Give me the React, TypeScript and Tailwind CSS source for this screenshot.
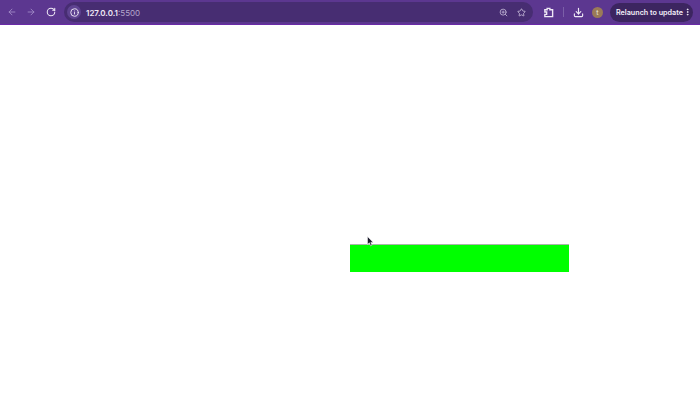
import React from 'react';
import { ArrowLeft, ArrowRight, RotateCw, Info, ZoomIn, Star, Download, EllipsisVertical } from 'lucide-react';

const App = () => {
  return (
    <div className="w-[700px] h-[415px] overflow-hidden bg-white font-['Inter','Liberation_Sans',sans-serif]">
      {/* browser toolbar */}
      <div className="h-[25px] bg-[#5c3790] border-b border-[#6a2aa8] flex items-center pl-[7px] pr-[4px]">
        <div className="flex items-center gap-[9px] text-[#a58fc9]">
          <ArrowLeft className="w-[10px] h-[10px]" strokeWidth={2} />
          <ArrowRight className="w-[10px] h-[10px]" strokeWidth={2} />
          <RotateCw className="ml-px w-[10px] h-[10px] text-[#eee8f5]" strokeWidth={2.5} />
        </div>
        <div className="ml-[8px] w-[469px] h-[20px] rounded-full bg-[#472d72] flex items-center pl-[3px] pr-[7px]">
          <div className="w-[14px] h-[14px] rounded-full bg-[#5f4391] flex items-center justify-center">
            <Info className="w-[9px] h-[9px] text-[#eee8f5]" strokeWidth={2.5} />
          </div>
          <span className="ml-[5px] pt-px text-[8px] leading-none font-semibold text-[#eee8f5]">
            127.0.0.1<span className="font-normal text-[#b5a7cc]">:5500</span>
          </span>
          <div className="ml-auto flex items-center gap-[9px]">
            <ZoomIn className="w-[9px] h-[9px] text-[#b5a7cc]" strokeWidth={2.5} />
            <Star className="w-[9px] h-[9px] text-[#d5cbe4]" strokeWidth={2} />
          </div>
        </div>
        <svg className="ml-[10px] w-[11px] h-[11px] text-[#eee8f5]" viewBox="0 0 12 12" fill="none" stroke="currentColor" strokeWidth="1.5">
          <path d="M2 3h2.5V1.5h3V3H10.5v7.5H2V8h2V5.5H2z" />
        </svg>
        <div className="ml-[9px] w-px h-[10px] bg-[#7b5fa8]" />
        <Download className="ml-[9px] w-[11px] h-[11px] text-[#eee8f5]" strokeWidth={2.5} />
        <div className="ml-[8px] w-[11px] h-[11px] rounded-full bg-[#9a7a58] flex items-center justify-center text-[7px] leading-none text-[#eee8dd]">
          t
        </div>
        <div className="ml-[7px] w-[83px] h-[19px] rounded-full bg-[#3c2560] flex items-center pl-[6px] text-[#f3eff8]">
          <span className="pt-px text-[7.2px] leading-none font-semibold whitespace-nowrap">Relaunch to update</span>
          <EllipsisVertical className="ml-auto mr-[1px] w-[10px] h-[10px]" strokeWidth={2.5} />
        </div>
      </div>

      {/* page */}
      <div className="relative pt-[219px] pl-[350px]">
        <div className="w-[219px] h-[28px] bg-[#00ff00] border-t border-[#aab5aa]" />
        <svg className="absolute left-[367px] top-[211px] w-[7px] h-[11px]" viewBox="0 0 7 11">
          <path d="M0.5 0.5V8.5L2.4 6.8L3.6 9.8L5 9.2L3.8 6.4H6.2Z" fill="#1a1a2a" stroke="#fff" strokeWidth="0.5" />
        </svg>
      </div>
    </div>
  );
};

export default App;
